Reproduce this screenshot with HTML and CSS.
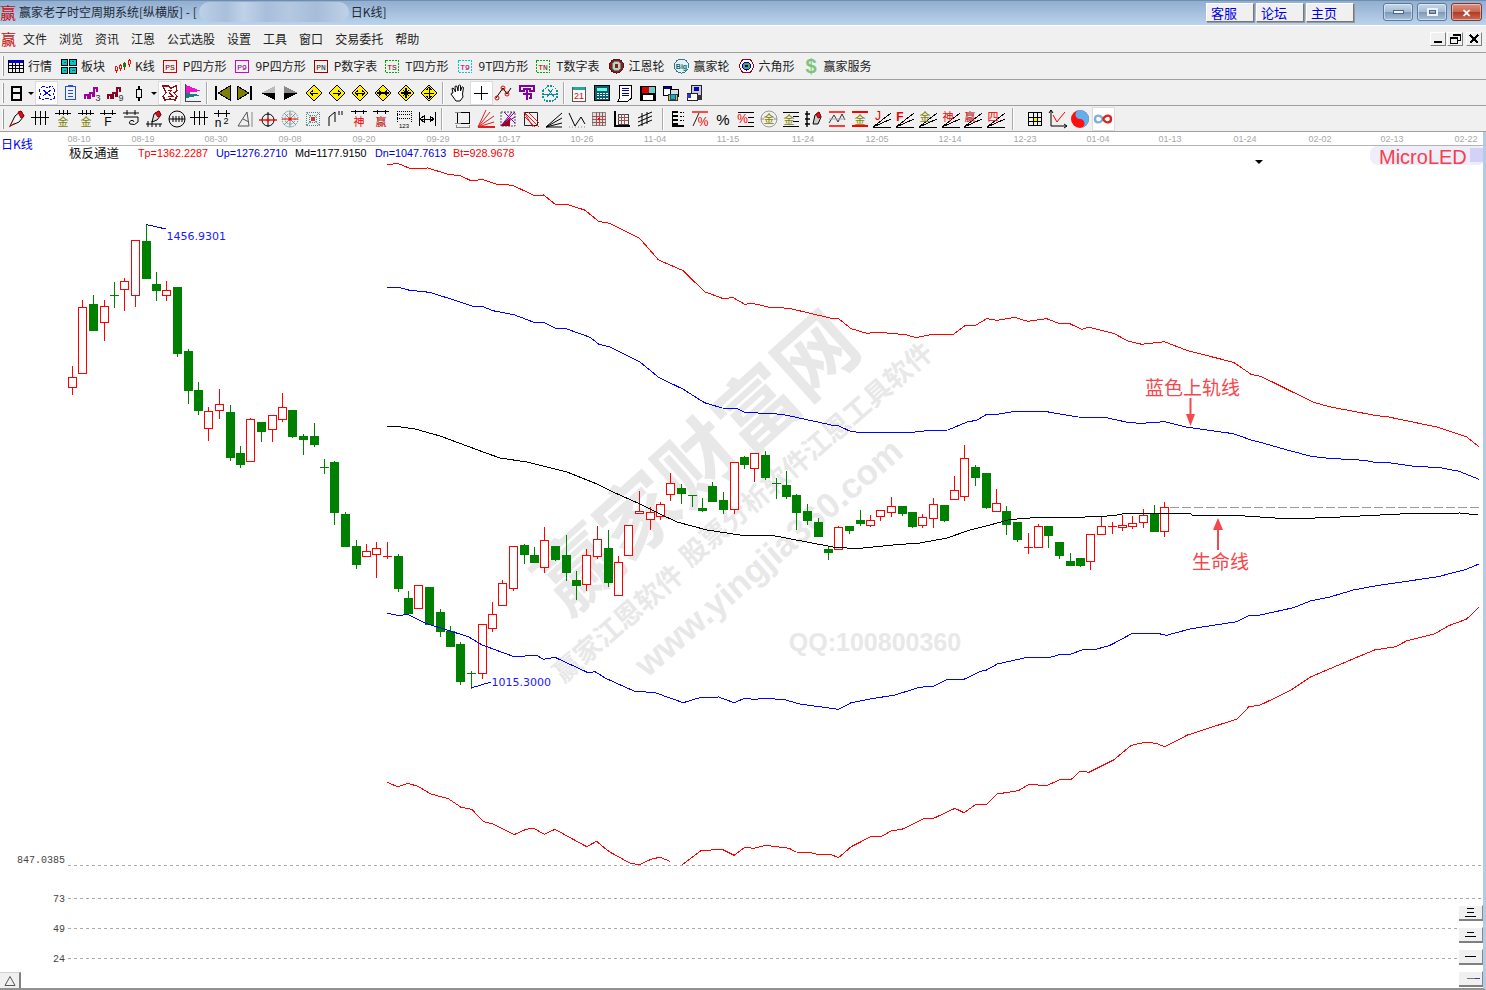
FILE: index.html
```html
<!DOCTYPE html>
<html lang="zh-CN">
<head>
<meta charset="utf-8">
<title>赢家老子时空周期系统[纵横版]</title>
<link rel="stylesheet" href="styles.css">
</head>
<body>
<svg class="defs" width="0" height="0" aria-hidden="true">
  <symbol id="fan" viewBox="0 0 20 20"><path d="M1 18L19 4M1 18L19 10M1 18H19"/></symbol>
  <symbol id="bars" viewBox="0 0 20 20"><path d="M1 8H19M5 2V16M10 2V16M15 2V16"/></symbol>
  <symbol id="diamond" viewBox="0 0 20 20"><path d="M10 2L18 10L10 18L2 10Z" fill="#ffef00" stroke="#000"/></symbol>
</svg>
<div class="app">
  <header class="titlebar">
    <span class="logo">赢</span>
    <span class="title-text">赢家老子时空周期系统[纵横版] - [</span>
    <span class="title-blur"></span>
    <span class="title-text">日K线]</span>
    <span class="title-links">
      <a class="link-btn">客服</a><a class="link-btn">论坛</a><a class="link-btn">主页</a>
    </span>
    <span class="win-controls">
      <span class="win-btn"><i class="g-min"></i></span>
      <span class="win-btn"><i class="g-max"></i></span>
      <span class="win-btn win-close">✕</span>
    </span>
  </header>

  <nav class="menubar">
    <span class="menu-logo">赢</span>
    <span>文件</span><span>浏览</span><span>资讯</span><span>江恩</span><span>公式选股</span><span>设置</span><span>工具</span><span>窗口</span><span>交易委托</span><span>帮助</span>
    <span class="mdi">
      <span class="mdi-btn"><i class="m-min"></i></span>
      <span class="mdi-btn"><svg class="ic" width="12" height="12" viewBox="0 0 12 12"><path d="M4 1.5H11V7H9M1 4.5H8V10.5H1Z" stroke-width="1"/><path d="M4 1.5H11M1 4.5H8" stroke-width="2"/></svg></span>
      <span class="mdi-btn mdi-gap"><svg class="ic" width="12" height="12" viewBox="0 0 12 12"><path d="M2 2L10 10M10 2L2 10" stroke-width="2.4"/></svg></span>
    </span>
  </nav>

  <div class="toolbar labeled">
    <i class="grip"></i>
    <span class="item"><svg class="ic s" viewBox="0 0 16 16"><path d="M.5 2.5H15.5V14.5H.5Z"/><path d="M1 3.5H15" stroke="#00c" stroke-width="3"/><path d="M1 7.5H15M1 10.5H15M4.5 5V14M8 5V14M11.5 5V14"/></svg>行情</span>
    <span class="item"><svg class="ic s" viewBox="0 0 16 16"><path d="M.5 1.5H7V7.5H.5ZM9 1.5H15.5V7.5H9ZM.5 9H7V15H.5ZM9 9H15.5V15H9Z" fill="#00c8c8"/><path d="M3 4H5M11 3H13M3 12H5M11 12H14" stroke="#066"/></svg>板块</span>
    <span class="item g9"><svg class="ic s" viewBox="0 0 18 16"><path d="M2.5 8V15M7 6V13M11.5 4V12M16 1V9" stroke="#c00"/><path d="M1.5 9H3.5V13H1.5ZM6 7H8V11H6ZM15 2H17V6H15Z" fill="#fff" stroke="#f00"/><path d="M10.5 5H12.5V9H10.5Z" fill="#080" stroke="#080"/></svg>K线</span>
    <span class="item"><svg class="ic b" viewBox="0 0 14 14"><path d="M.5 1.5H13.5V13.5H.5Z" stroke="#c00"/><text x="7" y="10.5" fill="#600">PS</text></svg>P四方形</span>
    <span class="item g9"><svg class="ic b" viewBox="0 0 14 14"><path d="M.5 1.5H13.5V13.5H.5Z" stroke="#d000d0"/><text x="7" y="10.5" fill="#800080">P9</text></svg>9P四方形</span>
    <span class="item"><svg class="ic b" viewBox="0 0 14 14"><path d="M.5 1.5H13.5V13.5H.5Z" stroke="#900"/><text x="7" y="10.5" fill="#222">PN</text></svg>P数字表</span>
    <span class="item"><svg class="ic b" viewBox="0 0 14 14"><path d="M.5 1.5H13.5V13.5H.5Z" stroke="#0a0" stroke-dasharray="2 1"/><text x="7" y="10.5" fill="#800">TS</text></svg>T四方形</span>
    <span class="item g10"><svg class="ic b" viewBox="0 0 14 14"><path d="M.5 1.5H13.5V13.5H.5Z" stroke="#0cc" stroke-dasharray="2 1"/><text x="7" y="10.5" fill="#a00060">T9</text></svg>9T四方形</span>
    <span class="item"><svg class="ic b" viewBox="0 0 14 14"><path d="M.5 1.5H13.5V13.5H.5Z" stroke="#0a0" stroke-dasharray="2 1"/><text x="7" y="10.5" fill="#800">TN</text></svg>T数字表</span>
    <span class="item"><svg class="ic s" viewBox="0 0 16 16"><circle cx="8" cy="8" r="7" fill="#8a1c2a" stroke="#60101c"/><circle cx="8" cy="8" r="4.5" fill="#b8d8c0" stroke="#5b8a6a"/><circle cx="8" cy="8" r="2" fill="#8a1c2a" stroke="none"/></svg>江恩轮</span>
    <span class="item"><svg class="ic s" viewBox="0 0 16 16"><circle cx="8" cy="8" r="7" fill="#e4f0f4" stroke="#2a7a90"/><text x="8" y="11" class="big" fill="#0a6a70">Big</text></svg>赢家轮</span>
    <span class="item"><svg class="ic s" viewBox="0 0 16 16"><path d="M4 1.5H12L15.5 8L12 14.5H4L.5 8Z" fill="#fff" stroke="#a00020"/><circle cx="8" cy="8" r="4" fill="#5aa060" stroke="#00a"/><circle cx="8" cy="8" r="1.5" fill="#00a" stroke="none"/></svg>六角形</span>
    <span class="item money"><b>$</b>赢家服务</span>
  </div>

  <div class="toolbar icons">
    <i class="grip"></i>
    <span class="tool"><svg class="ic" viewBox="0 0 20 20"><path d="M5.5 3.5H14.5V16.5H5.5ZM5.5 10H14.5" stroke-width="2"/></svg></span>
    <span class="dd"></span>
    <span class="tool on"><svg class="ic" viewBox="0 0 20 20"><path d="M2 7L6 3L10 5L15 3L18 7L16 11L18 15L14 17L10 15L6 17L2 15L4 11Z" stroke="#00f" stroke-dasharray="2 1"/><path d="M6 7L10 10L14 7M6 13L10 10L14 13" stroke="#00f"/></svg></span>
    <span class="tool"><svg class="ic" viewBox="0 0 20 20"><path d="M5.5 3.5H15.5V16.5H5.5Z" stroke="#2050e0"/><path d="M8 2.5H13M8 7.5H13M8 10.5H13M8 13.5H13" stroke="#2050e0"/></svg></span>
    <span class="tool"><svg class="ic" viewBox="0 0 20 20"><path d="M2 16V12H5V15H7V10H10V13H11V5H14V9" stroke="#a000a0" stroke-width="1.4"/><text x="15" y="18" class="sm" fill="#333">3</text></svg></span>
    <span class="tool"><svg class="ic" viewBox="0 0 20 20"><path d="M2 16V12H5V15H7V10H10V13H11V5H14V9" stroke="#900020" stroke-width="1.4"/><text x="15" y="18" class="sm" fill="#333">9</text></svg></span>
    <span class="tool"><svg class="ic" viewBox="0 0 20 20"><path d="M7.5 6.5H12.5V14.5H7.5ZM10 3V6M10 15V18" stroke-width="1.4"/></svg></span>
    <span class="dd"></span>
    <span class="tool on"><svg class="ic" viewBox="0 0 20 20"><path d="M3 3H8L11 5L16 3L17 8L14 10L17 13L15 17L10 16L5 17L3 13L6 10Z" stroke="#901010" stroke-width="1.4"/><path d="M8 7H12L9 10L13 13H8" stroke="#901010"/></svg></span>
    <span class="tool"><svg class="ic" viewBox="0 0 20 20"><path d="M3 2L18 8L3 10Z" fill="#f010d0" stroke="none"/><path d="M3 10L18 12L3 15Z" fill="#108080" stroke="none"/><path d="M2.5 1V18H18" stroke="#444"/></svg></span>
    <i class="sep s1"></i>
    <span class="tool"><svg class="ic" viewBox="0 0 20 20"><path d="M4 3V17" stroke-width="2"/><path d="M18 3V17L6 10Z" fill="#808000" stroke="#000"/></svg></span>
    <span class="tool"><svg class="ic" viewBox="0 0 20 20"><path d="M16 3V17" stroke-width="2"/><path d="M2 3V17L14 10Z" fill="#808000" stroke="#000"/></svg></span>
    <span class="tool"><svg class="ic" viewBox="0 0 20 20"><path d="M3 10L17 3V10Z" fill="#bbb" stroke="none"/><path d="M3 10L17 17V10Z" fill="#000" stroke="none"/></svg></span>
    <span class="tool"><svg class="ic" viewBox="0 0 20 20"><path d="M17 10L3 3V10Z" fill="#888" stroke="none"/><path d="M17 10L3 17V10Z" fill="#000" stroke="none"/></svg></span>
    <span class="tool"><svg class="ic" viewBox="0 0 20 20"><use href="#diamond"/><path d="M6 10H14M6 10L9 7.5M6 10L9 12.5"/></svg></span>
    <span class="tool"><svg class="ic" viewBox="0 0 20 20"><use href="#diamond"/><path d="M6 10H14M14 10L11 7.5M14 10L11 12.5"/></svg></span>
    <span class="tool"><svg class="ic" viewBox="0 0 20 20"><use href="#diamond"/><path d="M5 10H15M5 10L8 7.5M5 10L8 12.5M15 10L12 7.5M15 10L12 12.5"/></svg></span>
    <span class="tool"><svg class="ic" viewBox="0 0 20 20"><use href="#diamond"/><path d="M4 10H16M9 10L6 7.5M9 10L6 12.5M11 10L14 7.5M11 10L14 12.5" stroke-width="1.2"/></svg></span>
    <span class="tool"><svg class="ic" viewBox="0 0 20 20"><use href="#diamond"/><path d="M10 5V15M5 10H15M7 7L13 13M13 7L7 13" stroke-width="1.2"/></svg></span>
    <span class="tool"><svg class="ic" viewBox="0 0 20 20"><use href="#diamond"/><path d="M10 4V16M5 10H15M10 4L7.5 7M10 4L12.5 7M10 16L7.5 13M10 16L12.5 13"/></svg></span>
    <i class="sep s2"></i>
    <span class="tool"><svg class="ic soft" viewBox="0 0 20 20"><path d="M5 10L4 5.5Q5 4.5 6 6L7.5 9L7 3.5Q8 2.5 9 3.5L10 8L10.5 2.5Q11.5 1.5 12.5 2.5L12.5 8L14 4Q15 3.5 15.5 4.5L14.5 11L15 14L12 18H8L3 11Q3 10 5 10Z" fill="#fff"/></svg></span>
    <span class="tool on"><svg class="ic" viewBox="0 0 20 20"><path d="M10 3V17M3 10.5H17"/></svg></span>
    <span class="tool"><svg class="ic soft" viewBox="0 0 20 20"><path d="M2 15L9 5L13 11L17 5" stroke="#000"/><circle cx="3" cy="15" r="2" stroke="#e00"/><circle cx="9" cy="5" r="2" stroke="#e00"/><circle cx="13" cy="11" r="2" stroke="#e00"/></svg></span>
    <span class="tool"><svg class="ic" viewBox="0 0 20 20"><path d="M3 3H17V8H13V6H7V8H3ZM10 6V17M6 11H14V15H12" stroke="#8000a0" stroke-width="1.6"/></svg></span>
    <span class="tool"><svg class="ic" viewBox="0 0 20 20"><path d="M3 8L8 3H13L17 7V15L13 18H6L3 15Z" stroke="#109090" stroke-dasharray="2 1" stroke-width="1.4"/><path d="M8 6L14 14M13 6L7 14M4 11H16" stroke="#109090"/></svg></span>
    <i class="sep s3"></i>
    <span class="tool"><svg class="ic" viewBox="0 0 20 20"><path d="M3.5 4.5H16.5V18H3.5Z" fill="#fff" stroke="#555"/><path d="M4 5.5H16" stroke="#2a9" stroke-width="3"/><text x="10" y="16" class="sm" fill="#e00000">21</text></svg></span>
    <span class="tool"><svg class="ic" viewBox="0 0 20 20"><path d="M2.5 2.5H17.5V17.5H2.5Z" fill="#0a5f70"/><path d="M5 5H15V8H5Z" fill="#6fd" stroke="none"/><path d="M4.5 10H15.5M4.5 12.5H15.5M4.5 15H15.5" stroke="#fff" stroke-dasharray="2 1"/></svg></span>
    <span class="tool"><svg class="ic" viewBox="0 0 20 20"><path d="M4.5 2.5H16.5V15L13 18H3L4.5 15Z" fill="#fff"/><path d="M7 5H14M7 7.5H14M7 10H14M7 12.5H14" stroke="#00a"/></svg></span>
    <span class="tool"><svg class="ic" viewBox="0 0 20 20"><path d="M2.5 3.5H17.5V17.5H2.5Z" fill="#000"/><path d="M4 4H11V10H4Z" fill="#d00" stroke="none"/><path d="M11 4H17V10H11Z" fill="#6cc" stroke="none"/><path d="M5 12H15V17H5Z" fill="#fff" stroke="none"/></svg></span>
    <span class="tool"><svg class="ic" viewBox="0 0 20 20"><path d="M2.5 3.5H10.5V12.5H2.5Z" fill="#fff"/><path d="M3 4.5H10" stroke="#00a" stroke-width="2"/><path d="M9.5 6.5H17.5V13H9.5Z" fill="#ddd"/><path d="M7 11H16V17H7Z" fill="#d8c040" stroke="#333"/><circle cx="12" cy="14" r="3" fill="#3a8" stroke="#05a"/></svg></span>
    <span class="tool"><svg class="ic" viewBox="0 0 20 20"><path d="M7.5 2.5H17.5V12.5H7.5Z" fill="#ccc" stroke="#222"/><path d="M10 4H15V8H10Z" fill="#00c" stroke="none"/><path d="M3 10H13V17H3Z" fill="#fff" stroke="#222"/><path d="M3 11H7V15H3Z" fill="#33c" stroke="none"/><path d="M13 12H18V17H13Z" fill="#333" stroke="none"/></svg></span>
  </div>

  <div class="toolbar icons tight">
    <i class="grip"></i>
    <span class="tool"><svg class="ic soft" viewBox="0 0 20 20"><path d="M3 17L8 7L14 2L17 7L12 13Z" fill="#f4f4f4"/><path d="M11 3L14 2L17 7L14 9Z" fill="#e01010" stroke="#900"/><path d="M2 18L8 14" stroke="#f00"/></svg></span>
    <span class="tool"><svg class="ic" viewBox="0 0 20 20"><use href="#bars"/></svg></span>
    <span class="tool"><svg class="ic" viewBox="0 0 20 20"><path d="M2 4H18M6 1V6M14 1V6M10 1V6"/><text x="10" y="17" class="gold" fill="#808000">金</text></svg></span>
    <span class="tool"><svg class="ic" viewBox="0 0 20 20"><path d="M2 4H18M6 1V6M14 1V6M10 1V6"/><text x="10" y="17" class="gold" fill="#808000">金</text></svg></span>
    <span class="tool"><svg class="ic" viewBox="0 0 20 20"><path d="M2 4H18M6 1V6M14 1V6"/><text x="10" y="17" class="letter" fill="#000">F</text></svg></span>
    <span class="tool"><svg class="ic soft" viewBox="0 0 20 20"><path d="M2 4H18M6 1V6M14 1V6M3 8H17L17 13Q14 17 9 15Q7 13 10 11.5Q13 11 13 13"/></svg></span>
    <span class="tool"><svg class="ic soft" viewBox="0 0 20 20"><path d="M8 13L10 5L15 2L17 6L13 11Z" fill="#ddd"/><path d="M11 4L15 2L17 6L14 8Z" fill="#e01010" stroke="#900"/><path d="M2 15H18M4 12V18M8 12V18M12 15V18M16 15V18"/></svg></span>
    <span class="tool"><svg class="ic soft" viewBox="0 0 20 20"><circle cx="10" cy="10" r="8"/><path d="M2 10H18M6 7V13M9 7V13M12 7V13M15 7V13"/></svg></span>
    <span class="tool"><svg class="ic" viewBox="0 0 20 20"><use href="#bars"/></svg></span>
    <span class="tool"><svg class="ic" viewBox="0 0 20 20"><path d="M2 4H18M6 1V8M14 1V8"/><text x="6" y="18" class="letter" fill="#000">n</text><text x="14" y="15" class="sm" fill="#000">2</text></svg></span>
    <span class="tool"><svg class="ic soft" viewBox="0 0 20 20"><path d="M3 17L12 3L14 17ZM8 10L14 13" stroke="#555"/><path d="M17 3V18" stroke="#888"/></svg></span>
    <span class="tool"><svg class="ic soft" viewBox="0 0 20 20"><circle cx="10" cy="11" r="6" stroke="#000"/><path d="M10 3V18" stroke="#000"/><path d="M1 11H19" stroke="#f00" stroke-width="1.4"/><circle cx="10" cy="11" r="1.5" fill="#f00" stroke="none"/></svg></span>
    <span class="tool"><svg class="ic soft" viewBox="0 0 20 20"><circle cx="10" cy="10" r="8" stroke="#2a8a80" stroke-dasharray="1 1"/><circle cx="10" cy="10" r="5" stroke="#2a8a80" stroke-dasharray="1 1"/><path d="M2 10H18" stroke="#f00"/><path d="M10 2V18M4 4L16 16M16 4L4 16" stroke="#888"/><circle cx="10" cy="10" r="1.6" fill="#f00" stroke="none"/></svg></span>
    <span class="tool"><svg class="ic" viewBox="0 0 20 20"><path d="M3.5 3.5H16.5V16.5H3.5ZM6.5 6.5H13.5V13.5H6.5Z" stroke="#3a9088" stroke-dasharray="1 1"/><path d="M3 3L17 17M17 3L3 17" stroke="#999"/><path d="M8 8H12V12H8Z" fill="#e03030" stroke="none"/></svg></span>
    <span class="tool"><svg class="ic soft" viewBox="0 0 20 20"><path d="M3 17V8L9 3V13M13 2V6M16 2V6"/></svg></span>
    <span class="tool"><svg class="ic" viewBox="0 0 20 20"><path d="M2 2H18M6 1V5M14 1V5"/><text x="10" y="17" class="gold" fill="#f00000">神</text></svg></span>
    <span class="tool"><svg class="ic" viewBox="0 0 20 20"><path d="M2 2H18M6 1V5M14 1V5"/><text x="10" y="17" class="gold" fill="#c00000">赢</text></svg></span>
    <span class="tool"><svg class="ic" viewBox="0 0 20 20"><path d="M3 2H17V13M3 2V13M3 5H17M3 9H17" stroke-dasharray="1 1"/><text x="10" y="19" class="tiny" fill="#000">123</text></svg></span>
    <span class="tool"><svg class="ic" viewBox="0 0 20 20"><path d="M2 3V17M18 3V17M3 10H17M3 10L7 7V13ZM17 10L13 7V13Z"/></svg></span>
    <i class="sep s4"></i>
    <span class="tool"><svg class="ic" viewBox="0 0 20 20"><path d="M4.5 3.5H16.5V14.5H4.5Z"/><path d="M2 3.5H8M2 14.5H8M3.5 16V19M16.5 16V19M3 18H17" stroke="#888"/></svg></span>
    <span class="tool"><svg class="ic soft" viewBox="0 0 20 20"><path d="M2 18L10 1M2 18L14 3M2 18L18 7M2 18L18 13" stroke="#e02020"/><path d="M2 18H19" stroke="#e02020" stroke-width="2"/></svg></span>
    <span class="tool"><svg class="ic soft" viewBox="0 0 20 20"><path d="M3 3H17V17H3Z" stroke="#555" stroke-dasharray="2 1"/><path d="M3 17L17 3M3 17L14 3M3 17L17 8M6 3L17 14" stroke="#8000a0"/><path d="M3 17L12 9L12 17Z" fill="#a00020" stroke="none"/></svg></span>
    <span class="tool"><svg class="ic soft" viewBox="0 0 20 20"><path d="M3.5 3.5H16.5V16.5H3.5Z" stroke="#222"/><path d="M3 3L18 18M3 7L14 18M7 3L18 14M3 3L12 18" stroke="#e02020"/></svg></span>
    <span class="tool"><svg class="ic soft" viewBox="0 0 20 20"><path d="M2 18L18 4M2 18L18 9M2 18H18M2 18L18 14"/></svg></span>
    <span class="tool"><svg class="ic soft" viewBox="0 0 20 20"><path d="M2 4L8 17L14 8L18 15"/><path d="M2 18H18" stroke="#888" stroke-dasharray="1 2"/></svg></span>
    <span class="tool"><svg class="ic" viewBox="0 0 20 20"><path d="M3.5 3.5H16.5V16.5H3.5Z" fill="#ddd" stroke="#888"/><path d="M7 3V17M10 3V17M13 3V17M3 7H17M3 10H17M3 13H17" stroke="#a05050"/><path d="M9 9H11V11H9Z" fill="#f00" stroke="none"/></svg></span>
    <span class="tool"><svg class="ic" viewBox="0 0 20 20"><path d="M3 2V17H18" stroke-width="1.4"/><path d="M6 5H16V15H6Z" stroke="#444"/><path d="M9 5V15M12 5V15M6 8H16M6 11H16" stroke="#a05050"/></svg></span>
    <span class="tool"><svg class="ic soft" viewBox="0 0 20 20"><path d="M3 9L17 3M3 13L17 7M3 17L17 11M7 4V17M12 3V15"/></svg></span>
    <i class="sep s5"></i>
    <span class="tool"><svg class="ic" viewBox="0 0 20 20"><path d="M4.5 2V18M4.5 3H10M4.5 7H10M4.5 11H10M4.5 15H10M4.5 17H16" stroke-width="1.4"/><path d="M12 3H16M12 7H16M12 11H16" stroke-dasharray="2 1"/></svg></span>
    <span class="tool"><svg class="ic soft" viewBox="0 0 20 20"><path d="M2 3H18" stroke="#f00" stroke-width="1.4"/><path d="M3 17L9 4" stroke="#222"/><text x="13" y="17" class="letter" fill="#f00000">%</text></svg></span>
    <span class="tool"><svg class="ic" viewBox="0 0 20 20"><text x="10" y="16" class="pct" fill="#000">%</text></svg></span>
    <span class="tool"><svg class="ic" viewBox="0 0 20 20"><path d="M2 3H18M12 8H18M12 13H18M2 17H18"/><text x="6.5" y="14" class="letter" fill="#f00000">%</text></svg></span>
    <span class="tool"><svg class="ic soft" viewBox="0 0 20 20"><circle cx="10" cy="10" r="8" stroke="#999"/><path d="M2 10H5M15 10H18" stroke="#888"/><text x="10" y="14" class="gold" fill="#808000">金</text></svg></span>
    <span class="tool"><svg class="ic" viewBox="0 0 20 20"><path d="M2 3H18M12 7H18M12 12H18M2 17H18"/><text x="8" y="15" class="gold" fill="#808000">金</text></svg></span>
    <span class="tool"><svg class="ic soft" viewBox="0 0 20 20"><path d="M3 2V18M1 5H6M1 10H6M1 15H6" stroke-width="1.4"/><path d="M9 15L11 6L15 3L17 8L14 15Z" fill="#ccc"/><path d="M12 5L15 3L17 8L14 9Z" fill="#e01010" stroke="#900"/></svg></span>
    <span class="tool"><svg class="ic soft" viewBox="0 0 20 20"><path d="M2 3H18M2 17H18" stroke="#f00" stroke-width="1.4"/><path d="M2 14L7 6L11 13L15 5L18 11" stroke="#333"/><path d="M2 10H18" stroke="#aaa"/></svg></span>
    <span class="tool"><svg class="ic" viewBox="0 0 20 20"><path d="M2 3H18M2 17H18" stroke="#f00" stroke-width="1.4"/><text x="10" y="15" class="gold" fill="#808000">金</text></svg></span>
    <span class="tool"><svg class="ic" viewBox="0 0 20 20"><use href="#fan"/><text x="6" y="11" class="letter" fill="#f00000">J</text></svg></span>
    <span class="tool"><svg class="ic" viewBox="0 0 20 20"><use href="#fan"/><text x="5" y="12" class="letter bold" fill="#f00000">F</text></svg></span>
    <span class="tool"><svg class="ic" viewBox="0 0 20 20"><use href="#fan"/><text x="7" y="12" class="gold" fill="#808000">金</text></svg></span>
    <span class="tool"><svg class="ic" viewBox="0 0 20 20"><use href="#fan"/><text x="7" y="12" class="gold" fill="#f00000">神</text></svg></span>
    <span class="tool"><svg class="ic" viewBox="0 0 20 20"><use href="#fan"/><text x="7" y="12" class="gold" fill="#c00000">赢</text></svg></span>
    <span class="tool"><svg class="ic" viewBox="0 0 20 20"><use href="#fan"/><text x="7" y="12" class="gold" fill="#f00000">四</text></svg></span>
    <i class="sep s6"></i>
    <span class="tool"><svg class="ic" viewBox="0 0 20 20"><path d="M3.5 3.5H16.5V16.5H3.5ZM3 8H17M3 12.5H17M8 3V17M12.5 3V17"/><path d="M8.5 8.5H12V12H8.5Z" fill="#ffef00" stroke="none"/></svg></span>
    <span class="tool"><svg class="ic soft" viewBox="0 0 20 20"><path d="M3 1V17H19M3 1L1 4M3 1L5 4M19 17L16 15M19 17L16 19"/><path d="M5 6L9 13L12 9L17 3" stroke="#f00"/></svg></span>
    <span class="tool"><svg class="ic soft" viewBox="0 0 20 20"><circle cx="10" cy="10" r="9" fill="#ff1010" stroke="none"/><path d="M10 1A9 9 0 0 1 10 19A4.5 4.5 0 0 0 10 10A4.5 4.5 0 0 1 10 1Z" fill="#60b0f0" stroke="none"/><circle cx="10" cy="5.5" r="2" fill="#60b0f0" stroke="none"/><circle cx="10" cy="14.5" r="2" fill="#ff1010" stroke="none"/></svg></span>
    <span class="tool on"><svg class="ic soft" viewBox="0 0 20 20"><path d="M10 10C7 5 2 6 2 10C2 14 7 15 10 10" stroke="#7ab0e0" stroke-width="2.4"/><path d="M10 10C13 15 18 14 18 10C18 6 13 5 10 10" stroke="#e02020" stroke-width="2.4"/></svg></span>
  </div>

  <main class="chart">
    <svg class="plot" width="1483" height="856" viewBox="0 132 1483 856" role="img">
      <g class="watermark">
        <text class="wm-big" x="693" y="458" transform="rotate(-42 693 458)">赢家财富网</text>
        <text class="wm-cn" x="617" y="622" transform="rotate(-41 617 622)">赢家江恩软件</text>
        <text class="wm-cn" x="805" y="453" transform="rotate(-41 805 453)">股票分析软件江恩工具软件</text>
        <text class="wm-url" x="768" y="557" transform="rotate(-41 768 557)">www.yingjia360.com</text>
        <text class="wm-qq" x="875" y="642">QQ:100800360</text>
      </g>

      <path class="axis-line" d="M68 145.5H1483"/>
      <g class="dates">
        <text x="79" y="142">08-10</text><text x="143" y="142">08-19</text><text x="216" y="142">08-30</text><text x="290" y="142">09-08</text>
        <text x="364" y="142">09-20</text><text x="438" y="142">09-29</text><text x="509" y="142">10-17</text><text x="582" y="142">10-26</text>
        <text x="655" y="142">11-04</text><text x="728" y="142">11-15</text><text x="803" y="142">11-24</text><text x="877" y="142">12-05</text>
        <text x="950" y="142">12-14</text><text x="1025" y="142">12-23</text><text x="1098" y="142">01-04</text><text x="1170" y="142">01-13</text>
        <text x="1245" y="142">01-24</text><text x="1320" y="142">02-02</text><text x="1392" y="142">02-13</text><text x="1466" y="142">02-22</text>
      </g>
      <text class="period" x="1" y="149">日K线</text>
      <text class="legend-name" x="69" y="158">极反通道</text>
      <g class="legend">
        <text x="138" y="157" class="red">Tp=1362.2287</text>
        <text x="216" y="157" class="blue">Up=1276.2710</text>
        <text x="295" y="157" class="black">Md=1177.9150</text>
        <text x="375" y="157" class="blue">Dn=1047.7613</text>
        <text x="453" y="157" class="red">Bt=928.9678</text>
      </g>
      <path class="marker" d="M1255 160H1263L1259 164Z"/>
      <rect class="patch-a" x="1370" y="146" width="116" height="19" rx="8"/>
      <rect class="patch-b" x="1470" y="148" width="16" height="14"/>
      <text class="micro" x="1379" y="164">MicroLED</text>

      <g class="grid">
        <path d="M68 865.5H1481M68 898.5H1482M68 928.5H1457M68 958.5H1457"/>
      </g>
      <g class="scale">
        <text x="65" y="863">847.0385</text>
        <text x="65" y="902">73</text>
        <text x="65" y="932">49</text>
        <text x="65" y="962">24</text>
      </g>

      <g id="candles"></g>
      <path class="guide" d="M1170 507.5H1482"/>
      <g id="bands"></g>

      <path class="leader" d="M146 224.5L166 229M471 688L491 682"/>
      <text class="extreme" x="166.5" y="240">1456.9301</text>
      <text class="extreme" x="491.5" y="686">1015.3000</text>

      <text class="note" x="1145" y="395">蓝色上轨线</text>
      <path class="note-arrow" d="M1190.5 398V416"/>
      <path class="note-head" d="M1186 414H1195L1190.5 426Z"/>
      <text class="note" x="1192" y="569">生命线</text>
      <path class="note-arrow" d="M1218 550V530"/>
      <path class="note-head" d="M1213 530H1223L1218 518Z"/>
    </svg>

    <span class="corner-btn">
      <svg class="ic soft" width="12" height="12" viewBox="0 0 12 12"><path d="M6 1.5L1 10.5H11Z" stroke="#555"/></svg>
    </span>
    <div class="side-btns">
      <span class="side-btn"><i class="short"></i><i class="short"></i><i></i></span>
      <span class="side-btn"><i class="short"></i><i></i></span>
      <span class="side-btn"><i></i></span>
      <span class="side-btn"><i class="tick"></i></span>
    </div>
  </main>
</div>
<script src="chart.js"></script>
</body>
</html>
```
FILE: styles.css
```css
* { box-sizing: border-box; }
html, body { margin: 0; padding: 0; background: #fff; }
body { width: 1486px; height: 990px; overflow: hidden; font: 12px/1 "Noto Sans CJK SC", "Liberation Sans", sans-serif; color: #222; }
.defs { position: absolute; }
.app { width: 1486px; height: 990px; display: flex; flex-direction: column; }

.titlebar { height: 26px; display: flex; align-items: center; padding-bottom: 2px; background: linear-gradient(#92aed0, #bad3ec); border-top: 1px solid #6f8db0; border-bottom: 1px solid #fff; position: relative; }
.logo { width: 17px; margin-right: 2px; color: #c80c0c; font-size: 16px; }
.title-text { white-space: pre; color: #1f2a36; }
.title-blur { width: 150px; height: 20px; margin: 0 2px 0 2px; border-radius: 10px; background: linear-gradient(90deg, #bcd0e6 0, #a9bfda 18%, #c0d2e8 30%, #a8bedb 45%, #b4c8e0 60%, #a6bcd9 78%, #bed1e7 100%); }
.title-links { display: flex; gap: 2px; margin-left: auto; margin-right: 29px; }
.link-btn { width: 48px; height: 19px; padding-left: 4px; display: flex; align-items: center; font-size: 13px; color: #0000e0; background: #f0f0f0; border: 1px solid #fff; border-right-color: #777; border-bottom-color: #777; box-shadow: 1px 1px 0 #999; }
.win-controls { display: flex; gap: 4px; margin-right: 4px; }
.win-btn { width: 30px; height: 18px; display: flex; align-items: center; justify-content: center; border: 1px solid #5f7a98; border-radius: 3px; background: linear-gradient(#c7d8ea 0, #a4bcd6 48%, #7e9ab8 52%, #a9c2dc 100%); box-shadow: inset 0 0 0 1px rgba(255,255,255,.45); }
.win-close { width: 31px; background: linear-gradient(#dc9080 0, #c86850 48%, #b03c28 52%, #c86a54 100%); border-color: #7a3a30; color: #fff; font-size: 11px; font-weight: 700; }
.g-min { width: 11px; height: 4px; background: #eef3f9; border: 1px solid #4d6580; }
.g-max { width: 11px; height: 8px; border: 2px solid #eef3f9; outline: 1px solid #4d6580; outline-offset: -3px; }

.menubar { height: 27px; display: flex; align-items: center; gap: 12px; background: #f0f0f0; border-bottom: 1px solid #a0a0a0; font-size: 12px; padding-bottom: 1px; }
.menu-logo { width: 16px; margin-left: 1px; margin-right: -6px; color: #c80c0c; font-size: 15px; }
.mdi { margin-left: auto; display: flex; gap: 1px; margin-right: 4px; }
.mdi-btn { width: 16px; height: 14px; display: flex; align-items: center; justify-content: center; background: #f0f0f0; border: 1px solid #fff; border-right-color: #808080; border-bottom-color: #808080; }
.mdi-gap { margin-left: 2px; }
.m-min { width: 8px; height: 2px; background: #000; margin-top: 7px; }

.toolbar { display: flex; align-items: center; background: #f0f0f0; border-bottom: 1px solid #a0a0a0; }
.labeled { height: 27px; padding-left: 2px; }
.icons { height: 26px; padding-left: 2px; }
.grip { width: 2px; height: 20px; background: #fff; border-right: 1px solid #999; flex: none; }
.item { display: flex; align-items: center; gap: 4px; margin-left: 8px; white-space: nowrap; }
.item:first-of-type { margin-left: 3px; }
.item.g9 { margin-left: 9px; }
.item.g10 { margin-left: 10px; }
.s { width: 17px; height: 16px; flex: none; }
.b { width: 14px; height: 14px; flex: none; margin-right: 2px; }
.money b { width: 17px; padding-left: 3px; color: #7cc47c; font: 700 20px "Liberation Sans", sans-serif; }

.ic { fill: none; stroke: #000; stroke-width: 1; shape-rendering: crispEdges; overflow: visible; }
.ic.soft { shape-rendering: auto; }
.ic text { stroke: none; text-anchor: middle; font-family: "Noto Sans CJK SC", sans-serif; }
.ic .sm { font: 9px "Liberation Sans", sans-serif; }
.ic .tiny { font: 6px "Liberation Sans", sans-serif; }
.ic .gold { font: 11px "Noto Sans CJK SC", sans-serif; }
.ic .letter { font: 12px "Liberation Sans", sans-serif; }
.ic .bold { font-weight: 700; }
.ic .pct { font: 15px "Liberation Sans", sans-serif; }
.ic .big { font: 700 7px "Liberation Sans", sans-serif; }
.b text { font: 8px "Liberation Mono", monospace; }

.tool { width: 23px; height: 24px; flex: none; display: flex; align-items: center; justify-content: center; }
.tool svg { width: 20px; height: 20px; }
.tool.on { background: #fff; box-shadow: inset 0 0 0 1px #dcdcdc; }
.tight { padding-left: 2px; }
.tight .grip { margin-right: 2px; }
.tight .tool { width: 22.75px; }
.dd { width: 8px; height: 10px; flex: none; position: relative; }
.dd::after { content: ""; position: absolute; left: 1px; top: 4px; border: 3px solid transparent; border-top-color: #000; }
.sep { width: 2px; height: 22px; flex: none; background: #fff; border-left: 1px solid #aaa; }
.s1 { margin: 0 2.5px 0 2px; }
.s2 { margin: 0 3px 0 1px; }
.s3 { margin: 0 3px 0 1px; }
.s4 { margin: 0 8.35px 0 3px; }
.s5 { margin: 0 2px 0 6px; }
.s6 { margin: 0 9.6px 0 4.4px; }

.chart { flex: 1; position: relative; background: #fff; border-bottom: 2px solid #929292; border-right: 3px solid #b2cbe8; }
.plot { display: block; }

.watermark text { text-anchor: middle; dominant-baseline: central; fill: #e8e8e8; }
.wm-big { font: 700 80px "Noto Sans CJK SC", sans-serif; }
.wm-cn { font: 700 27px "Noto Sans CJK SC", sans-serif; }
.wm-url { font: 700 35px "Liberation Sans", sans-serif; }
.wm-qq { font: 700 25px "Liberation Sans", sans-serif; }

.axis-line { stroke: #b4b4b4; fill: none; }
.dates text { text-anchor: middle; font: 9px "Liberation Sans", sans-serif; fill: #a8a8a8; }
.period { font: 12px "Noto Sans CJK SC", sans-serif; fill: #0000f0; }
.legend-name { font: 12.5px "Noto Sans CJK SC", sans-serif; fill: #111; }
.legend text { font: 10.8px "Liberation Sans", sans-serif; }
.legend .red { fill: #f00; }
.legend .blue { fill: #0000e0; }
.legend .black { fill: #000; }
.marker { fill: #000; }
.patch-a { fill: #eeeefa; }
.patch-b { fill: #d2d2f6; }
.micro { font: 20px "Liberation Sans", sans-serif; fill: #f5404c; }

.grid path { stroke: #aaa; fill: none; stroke-dasharray: 3 3; }
.scale text { text-anchor: end; font: 10px "Liberation Mono", monospace; fill: #444; }

.c-up { fill: #f00; shape-rendering: crispEdges; }
.c-down { fill: #008000; shape-rendering: crispEdges; }
.c-body { fill: #fff; stroke: #f00; shape-rendering: crispEdges; }

.guide { stroke: #999; fill: none; stroke-dasharray: 9 3; shape-rendering: crispEdges; }
.band { fill: none; stroke-width: 1; shape-rendering: crispEdges; }
.band-red { stroke: #f00; }
.band-blue { stroke: #00f; }
.band-black { stroke: #000; }

.leader { stroke: #00f; fill: none; shape-rendering: crispEdges; }
.extreme { font: 11px "DejaVu Sans", sans-serif; fill: #1a1aff; }

.note { font: 19px "Noto Sans CJK SC", sans-serif; fill: #f5474c; }
.note-arrow { stroke: #f5474c; stroke-width: 2; fill: none; }
.note-head { fill: #f5474c; }

.corner-btn { position: absolute; left: 0; bottom: 0; width: 21px; height: 16px; display: flex; align-items: center; justify-content: center; background: #f0f0f0; border-right: 2px solid #808080; border-top: 1px solid #d0d0d0; }
.side-btns { position: absolute; right: 0; bottom: 1px; display: flex; flex-direction: column; gap: 6px; }
.side-btn { width: 24px; height: 16px; display: flex; flex-direction: column; align-items: center; justify-content: center; gap: 3px; background: #f0f0f0; border-top: 1px solid #fff; border-right: 1px solid #888; border-bottom: 2px solid #808080; }
.side-btn i { width: 11px; height: 1px; background: #000; flex: none; }
.side-btn i.short { width: 7px; }
.side-btn i.tick { width: 8px; background: #777; box-shadow: 5px 0 0 #3a3a90; }
```
FILE: chart.js
```js
const NS = "http://www.w3.org/2000/svg";

// x, rising, wick top, wick bottom, body top, body bottom
const CANDLES = [
  [72,1,366,395,377,387],[82,1,300,374,307,373],[93,0,295,331,304,330],[104,1,300,341,306,322],
  [114,0,282,308,295,295],[124,1,278,311,281,289],[135,1,240,307,240,295],[146,0,224,278,241,278],
  [156,0,272,301,284,290],[166,1,281,301,290,295],[177,0,287,357,287,353],[188,0,349,404,351,390],
  [198,0,382,415,390,410],[208,1,407,441,411,428],[219,1,389,419,404,410],[230,0,405,461,412,457],
  [240,0,446,468,453,464],[250,1,418,461,419,461],[261,0,422,442,422,431],[272,1,415,442,415,429],
  [282,1,393,422,407,419],[292,0,410,438,410,436],[303,0,434,455,436,439],[314,0,423,447,436,444],
  [324,0,459,474,467,467],[334,0,461,525,462,512],[345,0,512,546,514,546],[356,0,540,569,546,564],
  [366,1,544,556,551,556],[376,1,542,578,548,554],[387,1,542,559,556,556],[398,0,554,592,556,588],
  [408,0,591,614,598,613],[418,1,585,608,585,608],[429,0,587,624,587,624],[440,0,609,637,612,631],
  [450,0,626,646,631,646],[460,0,642,685,644,681],[471,0,671,689,673,673],[482,1,624,679,624,673],
  [492,1,602,632,614,628],[502,1,580,605,583,605],[513,1,546,591,546,588],[524,0,544,564,545,554],
  [534,0,547,562,555,562],[544,1,527,573,540,567],[555,0,546,561,546,559],[566,0,535,581,555,572],
  [576,0,571,600,580,585],[586,1,549,591,555,584],[597,1,526,559,539,556],[608,0,530,587,548,582],
  [618,1,556,595,562,595],[628,1,525,555,525,555],[639,1,491,513,511,513],[650,1,507,530,512,519],
  [660,1,502,520,504,516],[670,1,473,501,483,494],[681,0,484,504,488,493],[692,0,495,507,495,495],
  [702,0,498,512,508,510],[712,0,482,501,486,501],[723,0,492,514,500,509],[734,1,462,514,462,509],
  [744,0,456,469,457,464],[754,1,453,482,453,468],[765,0,451,480,455,477],[776,0,478,499,483,483],
  [786,0,471,499,485,496],[796,0,494,530,495,512],[807,0,504,525,511,520],[818,0,518,537,522,536],
  [828,0,546,560,549,552],[838,1,526,549,527,549],[849,0,526,534,526,530],[860,0,510,526,520,523],
  [870,1,515,527,520,525],[880,1,510,521,510,516],[891,1,497,517,506,512],[902,0,506,516,506,513],
  [912,0,512,528,512,526],[922,1,514,528,517,525],[933,1,498,528,504,518],[944,0,505,522,505,520],
  [954,1,476,499,490,499],[964,1,445,501,458,496],[975,0,465,486,467,477],[986,0,473,509,473,507],
  [996,1,489,511,503,511],[1006,0,506,535,511,524],[1017,0,522,542,522,539],[1028,1,533,554,547,547],
  [1038,1,524,548,526,547],[1048,0,526,548,526,535],[1059,0,542,559,542,555],[1070,0,553,565,561,565],
  [1080,0,558,567,558,565],[1090,1,534,570,534,561],[1101,1,516,534,526,534],[1112,1,522,534,526,526],
  [1122,1,515,531,525,527],[1132,1,516,529,523,526],[1143,1,509,528,515,522],[1154,0,505,532,513,531],
  [1164,1,502,537,507,531]
];

function el(name, attrs, parent) {
  const node = document.createElementNS(NS, name);
  for (const key in attrs) node.setAttribute(key, attrs[key]);
  parent.appendChild(node);
  return node;
}

const candleLayer = document.getElementById("candles");
for (const [x, up, wt, wb, bt, bb] of CANDLES) {
  const cls = up ? "c-up" : "c-down";
  el("rect", { class: cls, x, y: wt, width: 1, height: wb - wt }, candleLayer);
  if (bt === bb) {
    el("rect", { class: cls, x: x - 4, y: bt, width: 9, height: 1 }, candleLayer);
  } else if (up) {
    el("rect", { class: "c-body", x: x - 3.5, y: bt + 0.5, width: 8, height: bb - bt }, candleLayer);
  } else {
    el("rect", { class: cls, x: x - 4, y: bt, width: 9, height: bb - bt + 1 }, candleLayer);
  }
}

// Band traces were sampled off a crop stretched 1.4177x horizontally and 3x vertically.
const fromCrop = (pts, top) => pts.map(([x, y]) => `${(380 + x / 1.4177).toFixed(1)},${(top + y / 3).toFixed(1)}`).join(" ");
const TOP = 160, BOTTOM = 560;

const BANDS = [
  ["band-red", fromCrop([[10,15],[25,10],[42,25],[68,24],[95,42],[115,48],[130,63],[145,58],[165,72],[188,76],[220,108],[232,105],[248,132],[265,133],[290,150],[310,184],[325,190],[368,235],[395,300],[430,332],[460,395],[488,417],[500,412],[517,433],[528,430],[550,441],[580,445],[640,475],[650,476],[668,506],[690,520],[708,517],[745,524],[760,533],[785,522],[812,524],[830,496],[845,495],[860,476],[875,481],[900,472],[918,484],[945,476],[962,490],[978,491],[995,508],[1005,502],[1040,520],[1060,543],[1080,553],[1112,545],[1145,572],[1210,607],[1235,643],[1250,650],[1290,692],[1325,728],[1350,742],[1410,766],[1430,771],[1500,802],[1540,830],[1558,860]], TOP)],
  ["band-blue", fromCrop([[10,382],[28,383],[42,391],[70,397],[105,420],[130,438],[145,439],[160,452],[190,464],[218,487],[232,487],[248,504],[265,507],[298,532],[310,553],[325,560],[368,605],[395,652],[430,688],[460,728],[485,744],[505,745],[517,757],[570,763],[640,795],[650,797],[668,815],[695,819],[750,818],[780,811],[805,810],[835,784],[845,782],[860,763],[878,762],[900,754],[945,755],[990,771],[1030,773],[1062,788],[1080,790],[1112,785],[1145,802],[1210,821],[1235,840],[1250,848],[1290,872],[1320,889],[1345,895],[1395,901],[1410,907],[1430,908],[1470,920],[1500,922],[1530,934],[1558,958]], TOP)],
  ["band-black", "387,426 401,427 415,429 440,436 486,453 500,458 527,462 547,467 567,472 597,484 613,492 640,504 660,514 677,522 707,530 740,535 770,535 807,542 833,547 847,548 863,548 893,545 920,543 947,538 970,530 990,525 1008,520 1017,519 1043,517 1085,517 1107,516 1117,515 1127,513 1190,513 1192,515 1230,515 1290,519 1340,517 1400,514 1460,513 1478,515"],
  ["band-blue", fromCrop([[10,160],[25,166],[40,164],[65,190],[125,230],[145,255],[190,290],[222,286],[232,298],[248,292],[295,338],[305,335],[320,355],[360,393],[390,398],[430,428],[455,412],[480,411],[502,428],[517,415],[530,418],[550,415],[575,420],[595,432],[650,448],[668,428],[695,417],[730,405],[765,382],[785,378],[805,358],[828,358],[850,335],[860,330],[875,312],[918,292],[950,292],[965,283],[980,282],[995,270],[1015,268],[1035,256],[1065,222],[1100,219],[1115,226],[1150,206],[1215,185],[1232,166],[1248,165],[1295,143],[1320,122],[1345,112],[1380,90],[1410,78],[1500,50],[1540,28],[1558,12]], BOTTOM)],
  ["band-red", fromCrop([[10,667],[25,680],[40,670],[55,680],[72,702],[97,716],[115,742],[130,748],[147,785],[160,792],[190,824],[207,808],[218,805],[233,823],[248,808],[293,860],[307,844],[325,875],[355,910],[368,914],[385,897],[397,892],[411,904]], BOTTOM)],
  ["band-red", fromCrop([[428,915],[455,872],[485,868],[502,886],[517,862],[530,865],[547,856],[580,865],[590,876],[608,877],[620,883],[640,884],[650,893],[668,860],[695,831],[712,828],[725,812],[740,808],[770,777],[785,775],[815,745],[828,758],[845,733],[860,733],[875,702],[905,692],[920,673],[945,677],[965,658],[980,658],[993,633],[1005,637],[1040,600],[1065,556],[1085,547],[1100,550],[1112,560],[1145,525],[1215,477],[1232,440],[1248,435],[1290,392],[1320,350],[1385,292],[1410,270],[1440,260],[1455,243],[1495,222],[1515,197],[1540,178],[1558,142]], BOTTOM)]
];

const bandLayer = document.getElementById("bands");
for (const [cls, points] of BANDS) {
  el("polyline", { class: `band ${cls}`, points }, bandLayer);
}
```
